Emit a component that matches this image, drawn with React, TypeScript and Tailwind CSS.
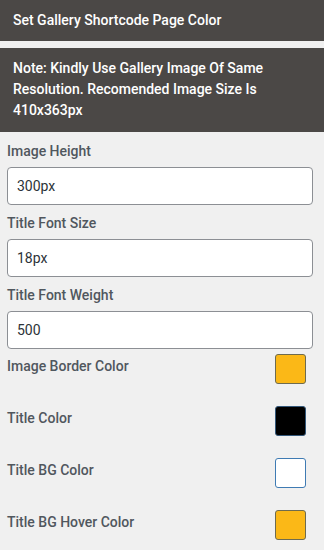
import React from "react";

const inputs = [
  { label: "Image Height", value: "300px" },
  { label: "Title Font Size", value: "18px" },
  { label: "Title Font Weight", value: "500" },
];

const colors = [
  { label: "Image Border Color", bg: "bg-[#fbb817]", border: "border-[#6e6b4f]" },
  { label: "Title Color", bg: "bg-[#000000]", border: "border-[#34587a]" },
  { label: "Title BG Color", bg: "bg-[#ffffff]", border: "border-[#3f7bb3]" },
  { label: "Title BG Hover Color", bg: "bg-[#fbb817]", border: "border-[#6e6b4f]" },
];

export default function App() {
  return (
    <div
      className="w-[324px] h-[550px] bg-[#f0f0f0] overflow-hidden"
      style={{ fontFamily: "Roboto, 'Liberation Sans', sans-serif" }}
    >
      <div className="h-[41px] bg-[#4b4846] flex items-center px-[13px] text-white text-[14px] font-medium">
        Set Gallery Shortcode Page Color
      </div>
      <div className="mt-[7px] h-[84px] bg-[#4b4846] px-[13px] pt-[10px] text-white text-[14px] font-medium leading-[21px]">
        Note: Kindly Use Gallery Image Of Same Resolution. Recomended Image Size Is 410x363px
      </div>
      <div className="pl-[7px] pr-[11px] pt-[9px]">
        {inputs.map((f, i) => (
          <div key={f.label} className={i > 0 ? "mt-[8px]" : ""}>
            <div className="h-[20px] leading-[20px] text-[14px] font-medium text-[#50575e]">{f.label}</div>
            <div className="mt-[6px] h-[38px] bg-white border border-[#8c8f94] rounded-[4px] flex items-center px-[9px] text-[14px] text-[#2c3338]">
              {f.value}
            </div>
          </div>
        ))}
        <div className="mt-[5px] flex flex-col gap-[22px]">
          {colors.map((c) => (
            <div key={c.label} className="flex items-start justify-between">
              <div className="mt-[2px] h-[20px] leading-[20px] text-[14px] font-medium text-[#50575e]">{c.label}</div>
              <div className={`mr-[7px] w-[31px] h-[30px] rounded-[3px] border ${c.bg} ${c.border}`} />
            </div>
          ))}
        </div>
      </div>
    </div>
  );
}
